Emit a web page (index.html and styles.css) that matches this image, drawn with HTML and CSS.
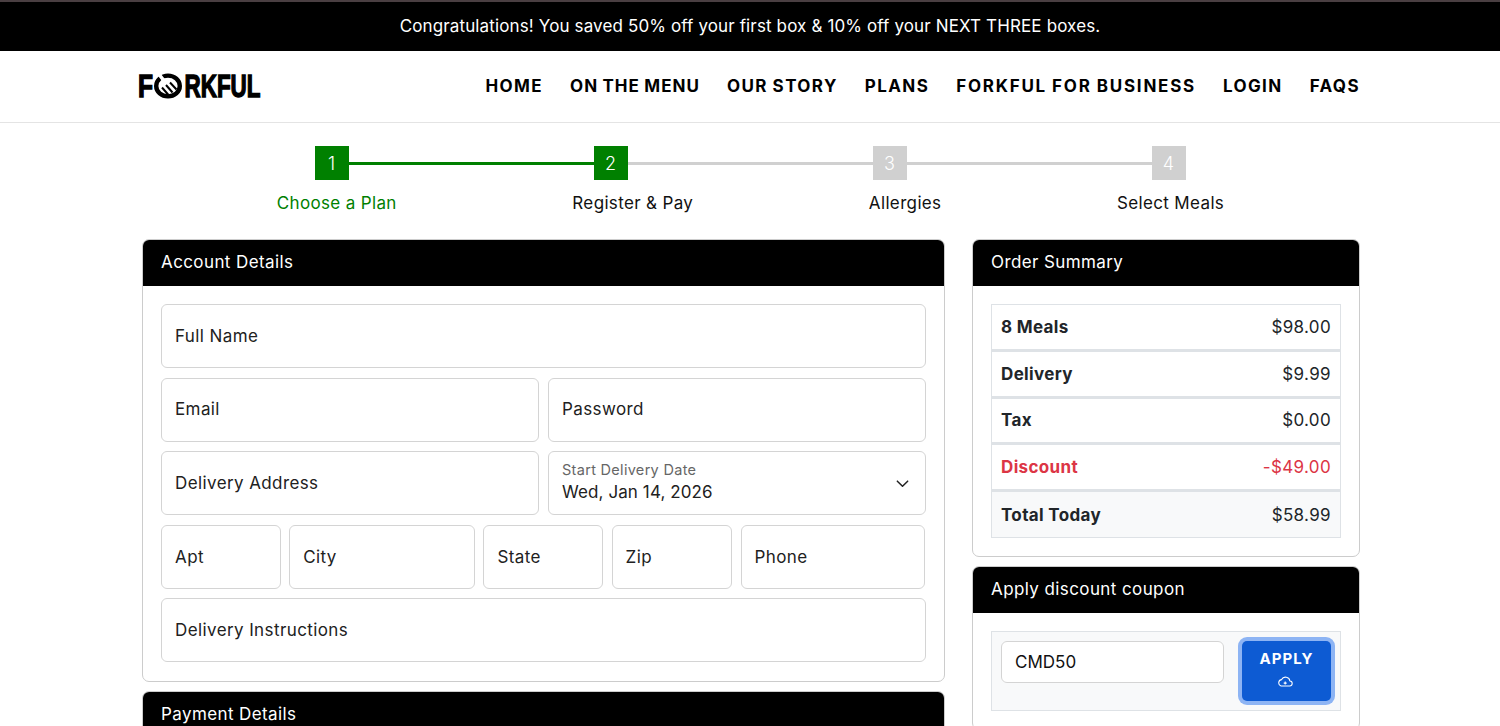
FILE: index.html
```html
<!DOCTYPE html>
<html lang="en">
<head>
<meta charset="utf-8">
<title>Forkful - Register &amp; Pay</title>
<link rel="stylesheet" href="styles.css">
</head>
<body>
<div class="promo">Congratulations! You saved 50% off your first box &amp; 10% off your NEXT THREE boxes.</div>
<header class="site-header">
  <a class="logo" href="#" aria-label="Forkful">
    <svg class="logo-svg" viewBox="0 0 170 40" aria-hidden="true">
      <text class="logo-text" x="1" y="31" textLength="15" lengthAdjust="spacingAndGlyphs">F</text>
      <ellipse cx="31" cy="20" rx="11.8" ry="10.4" fill="none" stroke="#000" stroke-width="4.4"/>
      <path d="M21 7 L29.5 18 L25 24" fill="none" stroke="#fff" stroke-width="3.6"/>
      <path d="M25 21.5 L31.5 29 M29 19 L35.5 26.5 M33 16.5 L39.5 23.5" fill="none" stroke="#000" stroke-width="2"/>
      <text class="logo-text" x="47.5" y="31" textLength="76" lengthAdjust="spacingAndGlyphs">RKFUL</text>
    </svg>
  </a>
  <nav class="nav">
    <a href="#">HOME</a><a class="nav-tight" href="#">ON THE MENU</a><a href="#">OUR STORY</a><a href="#">PLANS</a><a class="nav-wide" href="#">FORKFUL FOR BUSINESS</a><a href="#">LOGIN</a><a href="#">FAQS</a>
  </nav>
</header>
<section class="stepper">
  <div class="step-track">
    <span class="step-box done">1</span><span class="step-line done"></span>
    <span class="step-box done">2</span><span class="step-line"></span>
    <span class="step-box">3</span><span class="step-line"></span>
    <span class="step-box">4</span>
  </div>
  <div class="step-labels">
    <span class="active">Choose a Plan</span><span>Register &amp; Pay</span><span>Allergies</span><span>Select Meals</span>
  </div>
</section>
<main class="layout">
  <div class="column">
    <section class="card">
      <h2 class="card-head">Account Details</h2>
      <div class="card-body form">
        <div class="field">Full Name</div>
        <div class="row row-2"><div class="field">Email</div><div class="field">Password</div></div>
        <div class="row row-2"><div class="field">Delivery Address</div>
          <div class="field select">
            <div class="select-text"><small>Start Delivery Date</small><span>Wed, Jan 14, 2026</span></div>
            <svg class="chevron" viewBox="0 0 16 16" aria-hidden="true"><path d="M2.5 5.5 8 11l5.5-5.5" fill="none" stroke="#222" stroke-width="1.6" stroke-linecap="round" stroke-linejoin="round"/></svg>
          </div>
        </div>
        <div class="row row-5"><div class="field">Apt</div><div class="field">City</div><div class="field">State</div><div class="field">Zip</div><div class="field">Phone</div></div>
        <div class="field">Delivery Instructions</div>
      </div>
    </section>
    <section class="card">
      <h2 class="card-head">Payment Details</h2>
      <div class="card-body"></div>
    </section>
  </div>
  <aside class="column">
    <section class="card">
      <h2 class="card-head">Order Summary</h2>
      <div class="card-body">
        <div class="summary">
          <div class="line"><b>8 Meals</b><span>$98.00</span></div>
          <div class="line"><b>Delivery</b><span>$9.99</span></div>
          <div class="line"><b>Tax</b><span>$0.00</span></div>
          <div class="line discount"><b>Discount</b><span>-$49.00</span></div>
          <div class="line total"><b>Total Today</b><span>$58.99</span></div>
        </div>
      </div>
    </section>
    <section class="card">
      <h2 class="card-head">Apply discount coupon</h2>
      <div class="card-body">
        <div class="coupon">
          <div class="coupon-input">CMD50</div>
          <button class="apply" type="button">APPLY
            <svg class="cloud" viewBox="0 0 16 12" aria-hidden="true"><path d="M4 11h8.4a2.5 2.5 0 0 0 .5-5A4.4 4.4 0 0 0 4.6 4.6 3.3 3.3 0 0 0 4 11Z" fill="none" stroke="#fff" stroke-width="1.1" stroke-linejoin="round"/><path d="M8.2 6.6v3M6.7 8.1h3" stroke="#fff" stroke-width="1.1"/></svg>
          </button>
        </div>
      </div>
    </section>
  </aside>
</main>
</body>
</html>
```
FILE: styles.css
```css
* { box-sizing: border-box; }
html, body { height: 726px; overflow: hidden; }
body { margin: 0; background: #fff; color: #111; font-family: Inter, "Noto Sans", sans-serif; font-size: 17px; letter-spacing: .35px; }
a { color: inherit; text-decoration: none; }

.promo { height: 51px; background: #000; border-top: 2px solid #4a3f42; color: #fff; display: flex; align-items: center; justify-content: center; font-size: 17px; letter-spacing: .13px; padding-bottom: 2px; }

.site-header { height: 72px; border-bottom: 1px solid #e4e4e4; padding: 0 140px 0 137px; display: flex; align-items: center; justify-content: space-between; }
.logo { display: block; height: 40px; margin-bottom: 1px; }
.logo-svg { display: block; width: 170px; height: 40px; }
.logo-text { font-family: "Liberation Sans", sans-serif; font-weight: 700; font-size: 32px; letter-spacing: 0; fill: #000; stroke: #000; stroke-width: 1.4px; }
.nav { display: flex; gap: 27px; font-weight: 700; font-size: 17px; letter-spacing: 1.4px; word-spacing: -.6px; color: #000; padding-bottom: 2px; }
.nav-tight { letter-spacing: 1px; }
.nav-wide { letter-spacing: 1.75px; }

.stepper { padding-top: 23px; height: 116px; }
.step-track { width: 871px; margin: 0 auto; display: flex; align-items: center; }
.step-box { width: 34px; height: 34px; background: #d0d0d0; color: #fff; display: flex; align-items: center; justify-content: center; font-size: 18px; font-weight: 300; flex: none; letter-spacing: 0; }
.step-box.done { background: #008000; }
.step-line { flex: 1; height: 3px; background: #d0d0d0; }
.step-line.done { background: #008000; }
.step-labels { width: 1124px; padding-left: 1px; margin: 13px auto 0; display: flex; justify-content: space-around; font-size: 17px; line-height: 20px; color: #111; }
.step-labels .active { color: #008000; }

.layout { display: grid; grid-template-columns: 803px 388px; gap: 27px; padding-left: 142px; }
.column { display: flex; flex-direction: column; gap: 9px; }
.card { border: 1px solid #ccc; border-radius: 7px; overflow: hidden; }
.card-head { margin: -1px -1px 0; height: 47px; background: #000; color: #fff; font-size: 17px; font-weight: 400; letter-spacing: .4px; display: flex; align-items: center; padding: 0 19px 2px; }
.card-body { padding: 18px; }

.form { display: flex; flex-direction: column; gap: 9.6px; padding-bottom: 19px; }
.field { height: 64px; border: 1px solid #d4d4d4; border-radius: 6px; padding: 0 13px 1px; display: flex; align-items: center; font-size: 17px; letter-spacing: .4px; color: #212121; }
.row { display: grid; gap: 9px; }
.row-2 { grid-template-columns: 1fr 1fr; }
.row-5 { grid-template-columns: 119.6px 185.6px 119.6px 120.4px 184px; gap: 8.6px; }
.row-5 .field { padding-bottom: 0; }
.select { justify-content: space-between; padding: 0 15px 0 13px; }
.select-text { display: flex; flex-direction: column; }
.select-text small { font-size: 14.5px; line-height: 18px; letter-spacing: .3px; color: #666; margin: -1px 0 2px; }
.select-text span { font-size: 17px; line-height: 23px; letter-spacing: .1px; }
.chevron { width: 15px; height: 15px; }

.summary { border: 1px solid #dee2e6; }
.line { height: 46.8px; padding: 0 9px; display: flex; align-items: center; justify-content: space-between; border-bottom: 3px solid #dee2e6; font-size: 17px; letter-spacing: .35px; color: #212529; }
.line:last-child { border-bottom: 0; height: 45px; background: #f8f9fa; }
.line b { font-weight: 700; }
.discount b, .discount span { color: #dc3545; }

.coupon { height: 80px; background: #f8f9fa; border: 1px solid #dee2e6; padding: 9px; display: flex; align-items: flex-start; justify-content: space-between; }
.coupon-input { width: 223px; height: 42px; background: #fff; border: 1px solid #d4d4d4; border-radius: 6px; padding: 0 13px 1px; display: flex; align-items: center; font-size: 17px; letter-spacing: 0; }
.apply { width: 89px; height: 60px; background: #0d5bd3; border: 0; border-radius: 5px; box-shadow: 0 0 0 4px #8db4f4; color: #fff; font-family: Inter, sans-serif; font-weight: 700; font-size: 15px; line-height: 18px; letter-spacing: 1px; display: flex; flex-direction: column; align-items: center; justify-content: flex-start; gap: 7px; padding: 9px 0 0; }
.cloud { width: 16px; height: 12px; margin-right: 3px; }
```
